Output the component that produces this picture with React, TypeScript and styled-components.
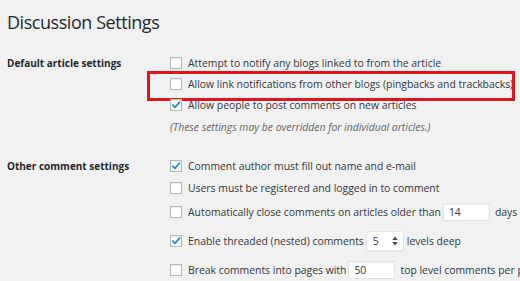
import styled, { createGlobalStyle } from "styled-components";

const GlobalStyle = createGlobalStyle`
  html, body {
    margin: 0;
    padding: 0;
    background: #f1f1f1;
  }
  body {
    font-family: "Open Sans", "Liberation Sans", sans-serif;
    color: #444;
    overflow: hidden;
  }
`;

const Page = styled.div`
  width: 520px;
  height: 281px;
  padding: 0 7px;
  box-sizing: border-box;
  overflow: hidden;
`;

const Title = styled.h1`
  margin: 0;
  padding-top: 9px;
  height: 52px;
  box-sizing: border-box;
  font-size: 18px;
  font-weight: 400;
  letter-spacing: -0.45px;
  line-height: 26px;
  color: #23282d;
`;

const Section = styled.div<{ $gap?: number }>`
  display: grid;
  grid-template-columns: 163px 1fr;
  margin-top: ${({ $gap }) => $gap ?? 0}px;
`;

const SectionLabel = styled.div<{ $h: number }>`
  height: ${({ $h }) => $h}px;
  display: flex;
  align-items: center;
  font-size: 10px;
  font-weight: 700;
  color: #23282d;
`;

const Options = styled.div`
  display: flex;
  flex-direction: column;
`;

const Row = styled.div<{ $h: number; $marked?: boolean }>`
  position: relative;
  height: ${({ $h }) => $h}px;
  display: flex;
  align-items: center;
  font-size: 10.4px;
  white-space: nowrap;
  color: #32373c;

  ${({ $marked }) =>
    $marked &&
    `
    &::after {
      content: "";
      position: absolute;
      left: -23px;
      right: -2px;
      top: -2px;
      bottom: -7px;
      border: 3px solid #e2131d;
      pointer-events: none;
    }
  `}
`;

const Box = styled.span`
  flex: none;
  width: 12px;
  height: 12px;
  margin-right: 6px;
  box-sizing: border-box;
  background: #fff;
  border: 1px solid #b4b9be;
  box-shadow: inset 0 1px 2px rgba(0, 0, 0, 0.1);
  display: flex;
  align-items: center;
  justify-content: center;
`;

const Note = styled.div`
  height: 22px;
  display: flex;
  align-items: center;
  font-size: 10.4px;
  font-style: italic;
  color: #666;
  margin-top: 1px;
`;

const Field = styled.span<{ $w: number }>`
  display: inline-flex;
  align-items: center;
  flex: none;
  width: ${({ $w }) => $w}px;
  height: 18px;
  margin: 0 5px 0 2px;
  padding-left: 5px;
  box-sizing: border-box;
  background: #fff;
  border: 1px solid #e2e2e2;
  box-shadow: inset 0 1px 2px rgba(0, 0, 0, 0.07);
  font-size: 10.4px;
  color: #32373c;
`;

const Select = styled.span`
  display: inline-flex;
  align-items: center;
  justify-content: space-between;
  flex: none;
  width: 38px;
  height: 20px;
  margin: 0 3px 0 2px;
  padding: 0 5px 0 6px;
  box-sizing: border-box;
  background: #fff;
  border: 1px solid #e2e2e2;
  border-radius: 3px;
  box-shadow: 0 1px 1px rgba(0, 0, 0, 0.04);
  font-size: 10.4px;
  color: #32373c;
`;

const Check = () => (
  <svg width="10" height="10" viewBox="0 0 10 10">
    <path
      d="M1.8 5.2 L4 7.4 L8.4 2.2"
      fill="none"
      stroke="#1e8cbe"
      strokeWidth="1.7"
      strokeLinecap="round"
      strokeLinejoin="round"
    />
  </svg>
);

const Arrows = () => (
  <svg width="6" height="10" viewBox="0 0 6 10">
    <path d="M3 0.5 L5.6 4 H0.4 Z" fill="#444" />
    <path d="M3 9.5 L5.6 6 H0.4 Z" fill="#444" />
  </svg>
);

function Checkbox({ checked }: { checked?: boolean }) {
  return <Box>{checked && <Check />}</Box>;
}

export default function App() {
  return (
    <>
      <GlobalStyle />
      <Page>
        <Title>Discussion Settings</Title>

        <Section>
          <SectionLabel $h={21}>Default article settings</SectionLabel>
          <Options>
            <Row $h={21}>
              <Checkbox />
              Attempt to notify any blogs linked to from the article
            </Row>
            <Row $h={21} $marked>
              <Checkbox />
              Allow link notifications from other blogs (pingbacks and trackbacks)
            </Row>
            <Row $h={21}>
              <Checkbox checked />
              Allow people to post comments on new articles
            </Row>
            <Note>(These settings may be overridden for individual articles.)</Note>
          </Options>
        </Section>

        <Section $gap={17}>
          <SectionLabel $h={22}>Other comment settings</SectionLabel>
          <Options>
            <Row $h={22}>
              <Checkbox checked />
              Comment author must fill out name and e-mail
            </Row>
            <Row $h={22}>
              <Checkbox />
              Users must be registered and logged in to comment
            </Row>
            <Row $h={26}>
              <Checkbox />
              Automatically close comments on articles older than
              <Field $w={47}>14</Field>
              days
            </Row>
            <Row $h={32}>
              <Checkbox checked />
              Enable threaded (nested) comments
              <Select>
                5
                <Arrows />
              </Select>
              levels deep
            </Row>
            <Row $h={26}>
              <Checkbox />
              Break comments into pages with
              <Field $w={47}>50</Field>
              top level comments per page
            </Row>
          </Options>
        </Section>
      </Page>
    </>
  );
}
